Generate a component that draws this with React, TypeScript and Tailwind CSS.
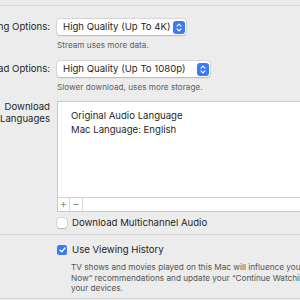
import type { ReactNode } from "react";

// macOS-style preferences pane: popups, a language list and checkboxes

const font = "font-['Inter','Liberation_Sans',sans-serif]";

function Stepper() {
  return (
    <span className="flex h-[13px] w-[12px] items-center justify-center rounded-[3px] bg-[#3a7bf3]">
      <svg width="6" height="9" viewBox="0 0 6 9" fill="none">
        <path d="M1 3.2L3 1.2L5 3.2M1 5.8L3 7.8L5 5.8" stroke="white" strokeWidth="1.1" strokeLinecap="round" strokeLinejoin="round" />
      </svg>
    </span>
  );
}

function Popup({ value, width }: { value: string; width: string }) {
  return (
    <div
      className={`flex h-[16px] items-center justify-between rounded-[3px] bg-white pl-[6px] pr-[1.5px] shadow-[0_0_0_0.5px_rgba(0,0,0,0.12),0_0.5px_1.5px_rgba(0,0,0,0.18)] ${width}`}
    >
      <span className="whitespace-nowrap text-[9.6px] leading-none text-[#1f1f1f]">{value}</span>
      <Stepper />
    </div>
  );
}

function Label({ children }: { children: ReactNode }) {
  return (
    <div className="flex w-[50px] shrink-0 flex-col items-end text-[9.6px] leading-[12px] text-[#1f1f1f]">
      {children}
    </div>
  );
}

function Row({ label, children }: { label: ReactNode; children: ReactNode }) {
  return (
    <div className="flex items-center gap-[7px]">
      <Label>{label}</Label>
      {children}
    </div>
  );
}

function Hint({ children, className = "" }: { children: ReactNode; className?: string }) {
  return (
    <div className={`ml-[57px] whitespace-nowrap text-[8.2px] leading-[12px] text-[#5f5f5f] ${className}`}>
      {children}
    </div>
  );
}

function Checkbox({ checked = false }: { checked?: boolean }) {
  if (checked) {
    return (
      <span className="flex h-[10px] w-[10px] shrink-0 items-center justify-center rounded-[2.5px] bg-[#3a7bf3]">
        <svg width="7" height="6" viewBox="0 0 7 6" fill="none">
          <path d="M1 3.2L2.7 4.8L6 1" stroke="white" strokeWidth="1.3" strokeLinecap="round" strokeLinejoin="round" />
        </svg>
      </span>
    );
  }
  return (
    <span className="h-[10px] w-[10px] shrink-0 rounded-[2.5px] bg-white shadow-[0_0_0_0.5px_rgba(0,0,0,0.2),0_0.5px_1px_rgba(0,0,0,0.15)]" />
  );
}

export default function App() {
  return (
    <div className={`h-[300px] w-[300px] overflow-hidden bg-[#ececec] ${font}`}>
      <div className="h-[5px]" />
      <div className="h-px bg-[#d9d9d9]" />

      <div className="mt-[13px]">
        <Row label={<span className="whitespace-nowrap">Streaming Options:</span>}>
          <Popup value="High Quality (Up To 4K)" width="w-[129px]" />
        </Row>
      </div>
      <Hint className="mt-[4px]">Stream uses more data.</Hint>

      <div className="mt-[10px]">
        <Row label={<span className="whitespace-nowrap">Download Options:</span>}>
          <Popup value="High Quality (Up To 1080p)" width="w-[153px]" />
        </Row>
      </div>
      <Hint className="mt-[4px]">Slower download, uses more storage.</Hint>

      <div className="mt-[8px] flex items-start gap-[7px]">
        <Label>
          <span>Download</span>
          <span>Languages</span>
        </Label>
        <div className="w-[280px] shrink-0 border border-[#c9c9c9] bg-white">
          <div className="h-[95px] pl-[13px] pt-[7px] text-[9.6px] leading-[14px] text-[#1f1f1f]">
            <div>Original Audio Language</div>
            <div>Mac Language: English</div>
          </div>
          <div className="flex h-[14px] border-t border-[#cfcfcf] text-[11px] leading-none text-[#8a8a8a]">
            <span className="flex w-[12px] items-center justify-center border-r border-[#d6d6d6]">+</span>
            <span className="flex w-[13px] items-center justify-center border-r border-[#d6d6d6]">−</span>
          </div>
        </div>
      </div>

      <div className="ml-[57px] mt-[5px] flex h-[12px] items-center gap-[5px]">
        <Checkbox />
        <span className="whitespace-nowrap text-[9.6px] text-[#1f1f1f]">Download Multichannel Audio</span>
      </div>

      <div className="mt-[5px] h-px bg-[#d6d6d6]" />

      <div className="ml-[57px] mt-[9px] flex h-[12px] items-center gap-[5px]">
        <Checkbox checked />
        <span className="whitespace-nowrap text-[9.6px] text-[#1f1f1f]">Use Viewing History</span>
      </div>

      <div className="ml-[71px] mt-[6px] whitespace-nowrap text-[8.2px] leading-[10.5px] text-[#555]">
        <div>TV shows and movies played on this Mac will influence your “Up Next” and “Watch</div>
        <div>Now” recommendations and update your “Continue Watching” progress across all</div>
        <div>your devices.</div>
      </div>

      <div className="mt-[4px] h-px bg-[#d6d6d6]" />
    </div>
  );
}
